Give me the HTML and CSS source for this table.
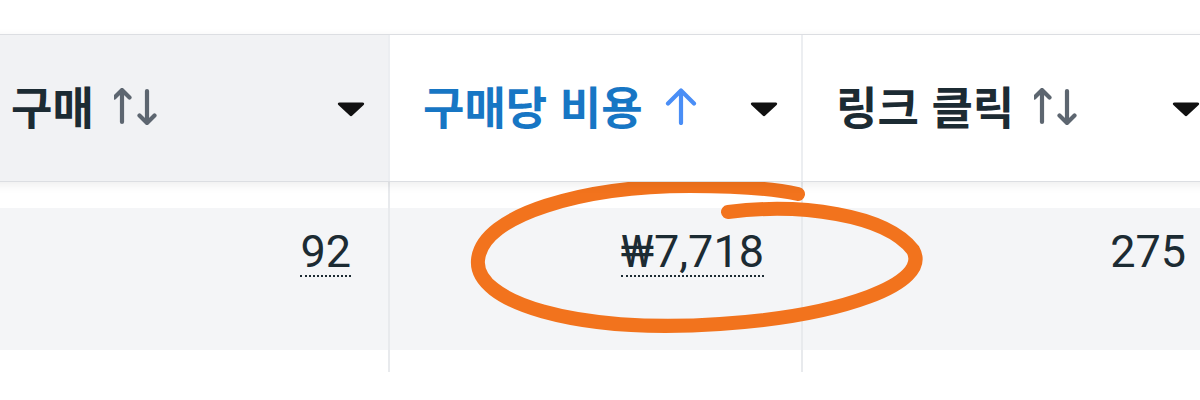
FILE: index.html
```html
<!DOCTYPE html>
<html lang="ko">
<head>
    <meta charset="UTF-8">
    <meta name="viewport" content="width=device-width, initial-scale=1.0">
    <title>구매당 비용</title>
    <link rel="stylesheet" href="styles.css">
</head>
<body>
    <div class="sheet">
        <div class="table">
            <div class="head">
                <div class="th th-muted">
                    <span class="label">구매</span>
                    <svg class="sort" width="46" height="37" viewBox="0 0 46 37">
                        <path d="M8 34V2M0.5 9.5L8 2l7.5 7.5" />
                        <path d="M33 3v32M25.5 27.5L33 35l7.5-7.5" />
                    </svg>
                    <span class="spacer"></span>
                    <svg class="caret" width="28" height="16" viewBox="0 0 28 16">
                        <path d="M2.5 1.5h23c1.6 0 2.2 1.4 1.1 2.5L15.3 14.6c-.7.7-1.9.7-2.6 0L1.4 4C.3 2.9.9 1.5 2.5 1.5z" />
                    </svg>
                </div>
                <div class="th th-active">
                    <span class="label">구매당 비용</span>
                    <svg class="sort-up" width="32" height="37" viewBox="0 0 32 37">
                        <path d="M16 35V3M3 15.5L16 2.5l13 13" />
                    </svg>
                    <span class="spacer"></span>
                    <svg class="caret" width="28" height="16" viewBox="0 0 28 16">
                        <path d="M2.5 1.5h23c1.6 0 2.2 1.4 1.1 2.5L15.3 14.6c-.7.7-1.9.7-2.6 0L1.4 4C.3 2.9.9 1.5 2.5 1.5z" />
                    </svg>
                </div>
                <div class="th">
                    <span class="label">링크 클릭</span>
                    <svg class="sort" width="46" height="37" viewBox="0 0 46 37">
                        <path d="M8 34V2M0.5 9.5L8 2l7.5 7.5" />
                        <path d="M33 3v32M25.5 27.5L33 35l7.5-7.5" />
                    </svg>
                    <span class="spacer"></span>
                    <svg class="caret" width="28" height="16" viewBox="0 0 28 16">
                        <path d="M2.5 1.5h23c1.6 0 2.2 1.4 1.1 2.5L15.3 14.6c-.7.7-1.9.7-2.6 0L1.4 4C.3 2.9.9 1.5 2.5 1.5z" />
                    </svg>
                </div>
            </div>

            <div class="body">
                <div class="td">
                    <div class="band"><span class="num num-link">92</span></div>
                </div>
                <div class="td">
                    <div class="band"><span class="num num-link">₩7,718</span></div>
                </div>
                <div class="td">
                    <div class="band"><span class="num">275</span></div>
                </div>
            </div>
        </div>

        <!-- hand drawn highlight -->
        <svg class="mark" width="1200" height="400" viewBox="0 0 1200 400">
            <path d="M728 212C800 203 885 214 913 250C932 284 840 316 720 324C575 334 474 302 478 260C482 214 585 186 690 186C735 186 770 188 798 194" />
        </svg>
    </div>
</body>
</html>
```

FILE: styles.css
```css
* {
    box-sizing: border-box;
    margin: 0;
    padding: 0;
}

body {
    background-color: #fff;
    font-family: Roboto, "Noto Sans CJK KR", sans-serif;
    color: #1c2b33;
    overflow: hidden;
}

.sheet {
    position: relative;
    width: 1200px;
    height: 400px;
    overflow: hidden;
}

.table {
    width: 1250px;
    margin-left: -22px;
    padding-top: 34px;
}

.head,
.body {
    display: grid;
    grid-template-columns: 412px 413px 422px;
}

.head {
    position: relative;
    z-index: 1;
    height: 148px;
    border-top: 1px solid #dcdee2;
    border-bottom: 1px solid #dcdee2;
    box-shadow: 0 3px 10px rgba(0, 0, 0, 0.07);
    background-color: #fff;
}

.th {
    display: flex;
    align-items: center;
    padding: 0 23px 0 33px;
    border-right: 2px solid #eceef1;
    font-family: "Noto Sans CJK KR", sans-serif;
    font-size: 45px;
    font-weight: 700;
    color: #1c2b33;
}

.th-muted {
    background-color: #f1f2f4;
}

.th-active {
    color: #1776c4;
}

.label {
    line-height: 1;
    margin-top: -6px;
}

.sort,
.sort-up {
    margin-left: 20px;
    margin-top: -4px;
    fill: none;
    stroke-width: 4.2;
    stroke-linecap: round;
    stroke-linejoin: round;
}

.sort {
    stroke: #5d6670;
}

.sort-up {
    margin-left: 22px;
    stroke: #4a8ef6;
}

.spacer {
    flex: 1;
}

.caret {
    fill: #111;
    margin-top: 2px;
}

.body {
    height: 190px;
}

.td {
    padding-top: 26px;
    border-right: 2px solid #e8eaed;
}

.band {
    display: flex;
    justify-content: flex-end;
    align-items: flex-start;
    height: 142px;
    padding: 21px 37px 0 0;
    background-color: #f4f5f7;
}

.num {
    font-size: 45px;
    line-height: 1;
    color: #1c2b33;
}

.num-link {
    padding-bottom: 1px;
    border-bottom: 2.5px dotted #1c2b33;
}

.mark {
    position: absolute;
    top: 0;
    left: 0;
    pointer-events: none;
}

.mark path {
    fill: none;
    stroke: #f2731d;
    stroke-width: 14;
    stroke-linecap: round;
}
```
